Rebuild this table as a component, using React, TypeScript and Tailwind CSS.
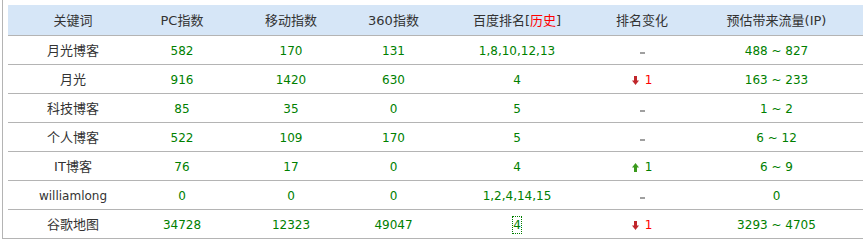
const rows = [
  { kw: "月光博客", pc: "582", mobile: "170", s360: "131", rank: "1,8,10,12,13", change: "-", flow: "488 ~ 827" },
  { kw: "月光", pc: "916", mobile: "1420", s360: "630", rank: "4", change: "down", flow: "163 ~ 233" },
  { kw: "科技博客", pc: "85", mobile: "35", s360: "0", rank: "5", change: "-", flow: "1 ~ 2" },
  { kw: "个人博客", pc: "522", mobile: "109", s360: "170", rank: "5", change: "-", flow: "6 ~ 12" },
  { kw: "IT博客", pc: "76", mobile: "17", s360: "0", rank: "4", change: "up", flow: "6 ~ 9" },
  { kw: "williamlong", pc: "0", mobile: "0", s360: "0", rank: "1,2,4,14,15", change: "-", flow: "0" },
  { kw: "谷歌地图", pc: "34728", mobile: "12323", s360: "49047", rank: "4", change: "down", flow: "3293 ~ 4705", focus: true },
];

const cols = "grid grid-cols-[130px_88px_130px_75px_172px_78px_191px]";

function ArrowDown() {
  return (
    <svg width="7" height="9" viewBox="0 0 7 9" className="block">
      <rect x="2" y="0" width="3" height="5" fill="#c0262b" />
      <path d="M0 4.5 L7 4.5 L3.5 9 Z" fill="#c0262b" />
    </svg>
  );
}

function ArrowUp() {
  return (
    <svg width="7" height="9" viewBox="0 0 7 9" className="block">
      <path d="M3.5 0 L7 4.5 L0 4.5 Z" fill="#3a9a1c" />
      <rect x="2" y="4" width="3" height="5" fill="#3a9a1c" />
    </svg>
  );
}

function Change({ value }: { value: string }) {
  if (value === "down") {
    return (
      <span className="flex items-center gap-[6px]">
        <ArrowDown />
        <span className="text-[#ff0000]">1</span>
      </span>
    );
  }
  if (value === "up") {
    return (
      <span className="flex items-center gap-[6px]">
        <ArrowUp />
        <span className="text-[#008000]">1</span>
      </span>
    );
  }
  // 无变化
  return <span className="mt-[3px] block h-[2px] w-[5px] bg-[#a0a0a0]" />;
}

export default function App() {
  return (
    <div className="w-full overflow-hidden bg-white font-['DejaVu_Sans','Noto_Sans_CJK_SC',sans-serif] text-[12px]">
      <div className="ml-[2px] border-l border-b border-[#b4b4b4] pl-[5px] pt-[5px]">
        {/* 表头 */}
        <div className={`${cols} h-[31px] border-b border-[#b4b4b4] bg-[#d6e6f7] text-[13px] text-[#333333]`}>
          <div className="flex items-center justify-center pt-[2px]">关键词</div>
          <div className="flex items-center justify-center pt-[2px]">PC指数</div>
          <div className="flex items-center justify-center pt-[2px]">移动指数</div>
          <div className="flex items-center justify-center pt-[2px]">360指数</div>
          <div className="flex items-center justify-center pt-[2px]">
            百度排名[<span className="text-[#ff0000]">历史</span>]
          </div>
          <div className="flex items-center justify-center pt-[2px]">排名变化</div>
          <div className="flex items-center justify-center pt-[2px]">预估带来流量(IP)</div>
        </div>

        {rows.map((r, i) => (
          <div
            key={r.kw}
            className={`${cols} ${i < rows.length - 1 ? "h-[29px] border-b border-[#b4b4b4]" : "h-[28px]"} text-[#008000]`}
          >
            <div
              className={`flex items-center justify-center pt-[2px] text-[#333333] ${r.kw === "williamlong" ? "text-[12px]" : "text-[13px]"}`}
            >
              {r.kw}
            </div>
            <div className="flex items-center justify-center pt-[2px]">{r.pc}</div>
            <div className="flex items-center justify-center pt-[2px]">{r.mobile}</div>
            <div className="flex items-center justify-center pt-[2px]">{r.s360}</div>
            <div className="flex items-center justify-center pt-[2px]">
              {r.focus ? (
                <span className="inline-block h-[18px] border border-dotted border-[#008000] leading-[16px]">{r.rank}</span>
              ) : (
                r.rank
              )}
            </div>
            <div className="flex items-center justify-center pt-[2px]">
              <Change value={r.change} />
            </div>
            <div className="flex items-center justify-center pt-[2px]">{r.flow}</div>
          </div>
        ))}
      </div>
    </div>
  );
}
